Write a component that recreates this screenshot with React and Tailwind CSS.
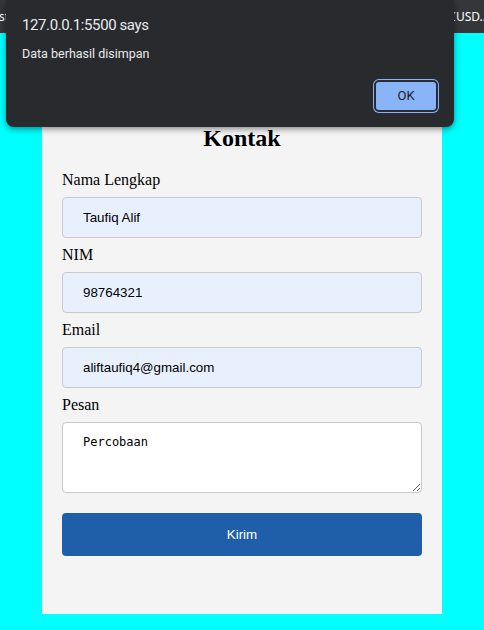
export default function App() {
  const fields = [
    { label: 'Nama Lengkap', value: 'Taufiq Alif' },
    { label: 'NIM', value: '98764321' },
    { label: 'Email', value: 'aliftaufiq4@gmail.com' },
  ];

  return (
    <div className="relative min-h-[630px] bg-[#00ffff]">
      {/* browser bar */}
      <div className="flex h-[33px] items-center justify-between overflow-hidden bg-[#35363a] text-[12px] text-white" style={{ fontFamily: '"Noto Sans", sans-serif' }}>
        <span className="-ml-[1px]">st</span>
        <span className="mr-[-2px]">CUSD..</span>
      </div>

      {/* form card */}
      <div className="pt-[71px]">
        <div className="mx-auto flex w-[400px] flex-col bg-[#f4f4f4] px-5 pt-5 pb-[58px]" style={{ fontFamily: '"Liberation Serif", serif' }}>
          <h2 className="mb-[19px] text-center text-[24px] font-bold leading-[28px] text-black">Kontak</h2>
          <div className="flex flex-col gap-2">
            {fields.map((f) => (
              <div key={f.label} className="flex flex-col gap-2">
                <label className="text-[16px] leading-[18px] text-black">{f.label}</label>
                <input
                  readOnly
                  value={f.value}
                  className="h-[41px] w-full rounded-[4px] border border-[#c9c9c9] bg-[#e8f0fe] px-5 text-[13.333px] text-black outline-none"
                  style={{ fontFamily: '"Liberation Sans", Arial, sans-serif' }}
                />
              </div>
            ))}
            <div className="flex flex-col gap-2">
              <label className="text-[16px] leading-[18px] text-black">Pesan</label>
              <textarea
                readOnly
                value="Percobaan"
                className="h-[71px] w-full rounded-[4px] border border-[#c9c9c9] bg-white px-5 py-3 text-[12px] leading-[15px] text-black outline-none"
                style={{ fontFamily: '"DejaVu Sans Mono", monospace' }}
              />
            </div>
          </div>
          <button
            className="mt-5 h-[43px] w-full rounded-[4px] bg-[#1f5fa9] text-[13.333px] text-white"
            style={{ fontFamily: '"Liberation Sans", Arial, sans-serif' }}
          >
            Kirim
          </button>
        </div>
      </div>

      {/* alert dialog */}
      <div
        className="absolute left-[6px] top-0 flex h-[127px] w-[448px] flex-col rounded-b-[8px] bg-[#292a2d] px-4 pt-[15px] pb-[15px] shadow-[0_2px_6px_rgba(0,0,0,0.45)]"
        style={{ fontFamily: 'Roboto, sans-serif' }}
      >
        <div className="text-[15px] leading-[20px] tracking-[-0.4px] text-[#e8eaed]">127.0.0.1:5500 says</div>
        <div className="mt-[10px] text-[12.5px] leading-[18px] text-[#e8eaed]">Data berhasil disimpan</div>
        <button className="mt-auto flex h-[32px] w-[64px] items-center justify-center self-end rounded-[5px] border-2 border-[#2b2c30] bg-[#8ab4f8] text-[13px] text-[#202124] shadow-[0_0_0_1px_#8ab4f8]">
          OK
        </button>
      </div>
    </div>
  );
}
